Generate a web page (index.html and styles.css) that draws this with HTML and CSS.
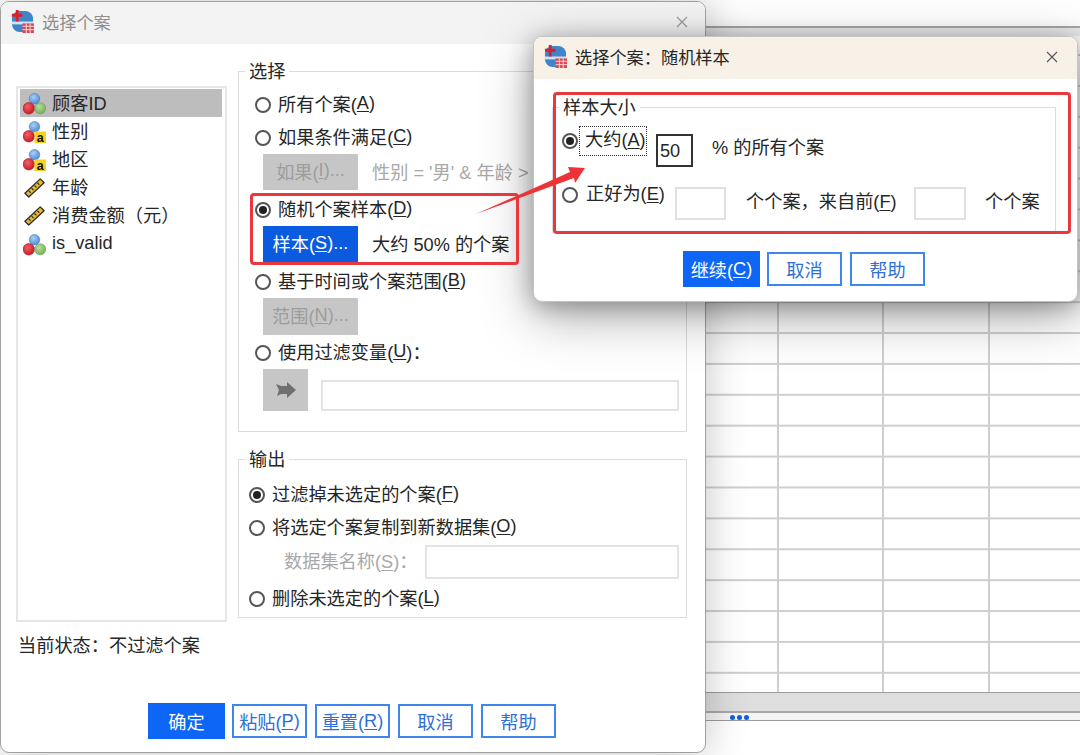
FILE: index.html
```html
<!DOCTYPE html>
<html lang="zh-CN">
<head>
<meta charset="utf-8">
<title>选择个案</title>
<link rel="stylesheet" href="styles.css">
</head>
<body>
<svg class="defs" width="0" height="0" aria-hidden="true">
  <defs>
    <radialGradient id="gb" cx="40%" cy="35%" r="70%"><stop offset="0" stop-color="#a9d0f5"/><stop offset="1" stop-color="#4a86d8"/></radialGradient>
    <radialGradient id="gr" cx="40%" cy="35%" r="70%"><stop offset="0" stop-color="#f0616a"/><stop offset="1" stop-color="#c8141e"/></radialGradient>
    <radialGradient id="gg" cx="40%" cy="35%" r="70%"><stop offset="0" stop-color="#b6dc9c"/><stop offset="1" stop-color="#72ad58"/></radialGradient>
    <symbol id="app" viewBox="0 0 24 24">
      <rect x="1" y="1" width="22" height="22" rx="8" fill="#3f86c9"/>
      <path d="M1 12h22v3H1z" fill="#cfe3f5"/>
      <path d="M5 0h3v4h4v3H8v5H5V7H1V4h4z" fill="#d8202c"/>
      <rect x="12" y="14" width="12" height="10" fill="#d94a55"/>
      <path d="M12 17h12M12 20.500h12M16 14v10M20 14v10" stroke="#f5d6d8" stroke-width="1"/>
    </symbol>
    <symbol id="nominal" viewBox="0 0 24 24">
      <circle cx="12" cy="7" r="5.500" fill="url(#gb)" stroke="#4a78b8" stroke-width=".6"/>
      <circle cx="6" cy="17" r="6" fill="url(#gr)" stroke="#a01018" stroke-width=".6"/>
      <circle cx="18" cy="17" r="5.800" fill="url(#gg)" stroke="#6c9c54" stroke-width=".6"/>
    </symbol>
    <symbol id="string" viewBox="0 0 24 24">
      <circle cx="12" cy="7" r="5.500" fill="url(#gb)" stroke="#4a78b8" stroke-width=".6"/>
      <circle cx="6" cy="17" r="6" fill="url(#gr)" stroke="#a01018" stroke-width=".6"/>
      <rect x="12" y="12" width="12" height="12" fill="#f7d21e"/>
      <text x="18" y="23" class="icon-a">a</text>
    </symbol>
    <symbol id="scale" viewBox="0 0 24 24">
      <path d="M2 18 18 3l4 4L6 22z" fill="#e8bb2c" stroke="#2c2c2c" stroke-width="1.400" stroke-linejoin="round"/>
      <path d="M6 15.500l2 2M9 12.700l2 2M12 9.900l2 2M15 7.100l2 2" stroke="#2c2c2c" stroke-width="1.200"/>
    </symbol>
    <symbol id="cross" viewBox="0 0 12 12">
      <path d="M1 1l10 10M11 1 1 11" stroke="currentColor" stroke-width="1.100" fill="none"/>
    </symbol>
  </defs>
</svg>

<div class="desktop">
  <div class="sheet">
    <div class="sheet-top"></div>
    <div class="sheet-head"></div>
    <div class="sheet-grid">
      <div class="col col-a"></div>
      <div class="col col-b"></div>
      <div class="col col-c"></div>
    </div>
    <div class="sheet-bar"></div>
    <div class="sheet-tabs"><span class="dots"><i></i><i></i><i></i></span></div>
  </div>

  <section class="window main-window">
    <header class="titlebar title-grey">
      <svg class="app-icon"><use href="#app"/></svg>
      <span class="title-text muted-title">选择个案</span>
      <svg class="close muted-close"><use href="#cross"/></svg>
    </header>
    <div class="main-body">
      <ul class="var-list">
        <li class="var selected"><svg class="var-icon"><use href="#nominal"/></svg>顾客ID</li>
        <li class="var"><svg class="var-icon"><use href="#string"/></svg>性别</li>
        <li class="var"><svg class="var-icon"><use href="#string"/></svg>地区</li>
        <li class="var"><svg class="var-icon"><use href="#scale"/></svg>年龄</li>
        <li class="var"><svg class="var-icon"><use href="#scale"/></svg>消费金额（元）</li>
        <li class="var"><svg class="var-icon"><use href="#nominal"/></svg>is_valid</li>
      </ul>
      <div class="groups">
        <fieldset class="group select-group">
          <legend>选择</legend>
          <div class="radio-row"><span class="radio"></span>所有个案(<u>A</u>)</div>
          <div class="radio-row"><span class="radio"></span>如果条件满足(<u>C</u>)</div>
          <div class="sub-row first-sub gap-b3"><span class="btn-square disabled">如果(<u>I</u>)...</span><span class="hint">性别 = '男' &amp; 年龄 &gt; 18</span></div>
          <div class="radio-row"><span class="radio on"></span>随机个案样本(<u>D</u>)</div>
          <div class="sub-row gap-b2"><span class="btn-square active">样本(<u>S</u>)...</span><span class="note">大约 50% 的个案</span></div>
          <div class="radio-row"><span class="radio"></span>基于时间或个案范围(<u>B</u>)</div>
          <div class="sub-row gap-b1"><span class="btn-square disabled">范围(<u>N</u>)...</span></div>
          <div class="radio-row"><span class="radio"></span>使用过滤变量(<u>U</u>)：</div>
          <div class="filter-row">
            <span class="arrow-btn"><svg width="22" height="18" viewBox="0 0 22 18"><path d="M1 3l5 2h6V1l9 8-9 8v-4H6l-4 2 2-6z" fill="#6f6f6f"/></svg></span>
            <span class="field filter-field"></span>
          </div>
        </fieldset>
        <fieldset class="group output-group">
          <legend>输出</legend>
          <div class="radio-row"><span class="radio on"></span>过滤掉未选定的个案(<u>F</u>)</div>
          <div class="radio-row"><span class="radio"></span>将选定个案复制到新数据集(<u>O</u>)</div>
          <div class="name-row"><span class="name-label">数据集名称(<u>S</u>)：</span><span class="field name-field"></span></div>
          <div class="radio-row"><span class="radio"></span>删除未选定的个案(<u>L</u>)</div>
        </fieldset>
      </div>
    </div>
    <p class="status">当前状态：不过滤个案</p>
    <footer class="actions main-actions">
      <span class="btn primary wide">确定</span>
      <span class="btn">粘贴(<u>P</u>)</span>
      <span class="btn">重置(<u>R</u>)</span>
      <span class="btn">取消</span>
      <span class="btn">帮助</span>
    </footer>
  </section>

  <section class="window sub-window">
    <header class="titlebar title-cream">
      <svg class="app-icon"><use href="#app"/></svg>
      <span class="title-text">选择个案：随机样本</span>
      <svg class="close sub-close"><use href="#cross"/></svg>
    </header>
    <fieldset class="group size-group">
      <legend>样本大小</legend>
      <div class="size-row">
        <span class="radio on size-radio"></span>
        <span class="focus-box">大约(<u>A</u>)</span>
        <span class="size-input dark">50</span>
        <span class="size-text pct">% 的所有个案</span>
      </div>
      <div class="size-row second">
        <span class="radio size-radio"></span>
        <span class="exact-label">正好为(<u>E</u>)</span>
        <span class="size-input light first-input"></span>
        <span class="size-text cases">个个案，来自前(<u>F</u>)</span>
        <span class="size-input light second-input"></span>
        <span class="size-text total">个个案</span>
      </div>
    </fieldset>
    <footer class="actions sub-actions">
      <span class="btn primary wide">继续(<u>C</u>)</span>
      <span class="btn">取消</span>
      <span class="btn">帮助</span>
    </footer>
  </section>

  <div class="mark mark-left"></div>
  <div class="mark mark-right"></div>
  <svg class="arrow" width="1080" height="755" viewBox="0 0 1080 755"><polygon points="476,214 570,172 568,167 585,168 575,183 574,178" fill="#ee3338"/></svg>
</div>
</body>
</html>
```
FILE: styles.css
```css
* { box-sizing: border-box; }
html, body { margin: 0; padding: 0; background: #fff; }
body { font-family: "Liberation Sans", "Noto Sans CJK SC", sans-serif; font-size: 18.2px; color: #262626; }
.defs { position: absolute; }
.icon-a { font: bold 13px "Liberation Sans", sans-serif; text-anchor: middle; fill: #111; }

.desktop { position: relative; width: 1080px; height: 755px; overflow: hidden; background: #fff; }

/* background data sheet */
.sheet { display: flex; flex-direction: column; height: 755px; padding-left: 706px; }
.sheet-top { height: 26px; flex: none; }
.sheet-head { height: 10px; flex: none; border-top: 2px solid #a8a8a8; background: #ececec; }
.sheet-grid {
  height: 656px; flex: none; display: flex;
  background-image: linear-gradient(to top, #cfcfcf 2px, transparent 2px);
  background-size: 100% 30.9px;
  background-position: 0 -10.9px;
}
.col { height: 100%; border-right: 2px solid #cfcfcf; flex: none; }
.col-a { width: 73px; }
.col-b { width: 105px; }
.col-c { width: 106px; }
.sheet-bar { height: 21px; flex: none; background: #dedede; border-top: 1px solid #9c9c9c; border-bottom: 2px solid #a8a8a8; }
.sheet-tabs { height: 8px; flex: none; background: #f4f4f4; border-bottom: 1px solid #9c9c9c; }
.dots { display: flex; gap: 2px; padding: 2px 0 0 24px; }
.dots i { width: 5px; height: 5px; border-radius: 50%; background: #0f5fe0; }

/* windows */
.window { position: absolute; background: #fff; }
.main-window {
  left: 0; top: 1px; width: 706px; height: 752px;
  display: flex; flex-direction: column;
  border: 1px solid #a0a0a0; border-radius: 9px;
  box-shadow: 0 0 42px rgba(0, 0, 0, .24);
}
.sub-window {
  left: 533px; top: 36px; width: 545px; height: 266px;
  border: 1px solid #c4c4c4; border-radius: 9px;
  box-shadow: 0 4px 22px rgba(0, 0, 0, .28), 0 14px 52px rgba(0, 0, 0, .34);
}
.titlebar { display: flex; align-items: center; height: 42px; flex: none; padding: 0 0 3px 10px; border-radius: 8px 8px 0 0; }
.title-grey { background: #f3f3f3; }
.title-cream { background: #f8f1e7; }
.app-icon { width: 23px; height: 23px; flex: none; margin-right: 8px; }
.title-text { font-size: 17.2px; flex: 1; }
.muted-title { color: #8e8e8e; }
.close { width: 12px; height: 12px; flex: none; margin-right: 17px; color: #555; }
.muted-close { color: #999; }
.sub-close { margin-right: 19px; }

/* main dialog */
.main-body { display: flex; height: 577px; flex: none; padding-left: 15px; }
.var-list {
  list-style: none; margin: 42px 0 0; padding: 1px 2px;
  width: 211px; height: 536px; flex: none;
  border: 2px solid #e6e6e6;
}
.var { display: flex; align-items: center; height: 28px; padding: 0 0 2px 3px; white-space: nowrap; }
.var:last-child { padding-bottom: 0; }
.var.selected { background: #bdbdbd; margin-right: 1px; }
.var-icon { width: 23px; height: 23px; flex: none; margin: 2px 6px 0 0; }
.groups { margin-left: 11px; width: 449px; flex: none; padding-top: 14px; }
.group { margin: 0; border: 1px solid #dcdcdc; min-width: 0; padding: 0; }
.group legend { padding: 2px 4px 0; line-height: 24px; }
.select-group { height: 374px; padding: 4px 0 0 16px; }
.select-group legend { margin-left: -10px; }
.output-group { height: 172px; margin-top: 14px; padding: 6px 0 0 10px; }
.output-group legend { margin-left: -4px; }
.radio-row { display: flex; align-items: center; height: 33px; padding-bottom: 3px; white-space: nowrap; }
u { text-underline-offset: 2px; }
.radio { position: relative; display: inline-block; width: 16px; height: 16px; flex: none; border: 2px solid #555; border-radius: 50%; margin: 3px 7px 0 0; background: #fff; }
.radio.on::after { content: ""; position: absolute; left: 2px; top: 2px; width: 8px; height: 8px; border-radius: 50%; background: #222; }
.sub-row { display: flex; align-items: center; height: 37px; margin-left: 8px; white-space: nowrap; }
.sub-row.first-sub { height: 36px; }
.first-sub .btn-square { height: 36px; }
.gap-b3 { margin-bottom: 3px; }
.gap-b2 { margin-bottom: 2px; }
.gap-b1 { margin-bottom: 1px; }
.btn-square { display: flex; align-items: center; justify-content: center; width: 95px; height: 37px; padding-bottom: 3px; flex: none; }
.btn-square.disabled { background: #c6c6c6; color: #9d9d9d; }
.btn-square.active { background: #0b5be0; color: #fff; }
.hint { margin: 0 0 3px 14px; color: #a8a8a8; }
.note { margin: 0 0 3px 14px; }
.filter-row { display: flex; align-items: flex-end; height: 42px; margin-left: 8px; }
.arrow-btn { display: flex; align-items: center; justify-content: center; width: 45px; height: 42px; background: #c6c6c6; }
.field { display: block; border: 2px solid #e4e4e4; background: #fff; }
.filter-field { width: 358px; height: 31px; margin-left: 13px; }
.name-row { display: flex; align-items: center; height: 34px; margin: 1px 0 3px; }
.name-label { width: 176px; flex: none; padding: 0 0 4px 35px; color: #a8a8a8; white-space: nowrap; }
.name-field { width: 254px; height: 34px; }
.status { margin: 13px 0 0 17px; line-height: 24px; }
.actions { display: flex; align-items: center; gap: 8px; }
.main-actions { margin-top: 45px; padding-left: 147px; }
.btn { display: flex; align-items: center; justify-content: center; width: 75px; height: 34px; border: 2px solid #3f86ee; color: #2f6fd8; white-space: nowrap; }
.btn.primary { background: #0d66f5; border-color: #0d66f5; color: #fff; }
.btn.wide { width: 77px; height: 36px; margin-right: -1px; }

/* sub dialog */
.size-group { width: 504px; height: 139px; margin: 15px 0 0 18px; padding: 6px 0 0 9px; }
.size-group legend { margin-left: -3px; }
.size-row { display: flex; align-items: flex-start; height: 41px; white-space: nowrap; }
.size-row.second { margin-top: 13px; }
.radio.size-radio { margin: 7px 1px 0 0; }
.focus-box { display: block; height: 30px; width: 68px; line-height: 26px; padding-left: 5px; border: 1px dotted #333; }
.size-input { display: block; flex: none; background: #fff; }
.size-input.dark { width: 37px; height: 33px; margin: 8px 0 0 9px; border: 2px solid #333; padding-left: 2px; line-height: 30px; }
.size-input.light { height: 33px; margin-top: 7px; border: 2px solid #e0e0e0; }
.size-text { margin-top: 10px; line-height: 24px; }
.pct { margin-left: 19px; }
.exact-label { margin-left: 7px; line-height: 28px; width: 77px; }
.first-input { width: 51px; margin-left: 12px; }
.cases { margin-left: 20px; width: 150px; }
.second-input { width: 52px; margin-left: 18px; }
.total { margin-left: 19px; }
.sub-actions { margin-top: 18px; padding-left: 149px; }

/* annotations */
.mark { position: absolute; border: 3px solid #e8383d; border-radius: 4px; }
.mark-left { left: 250px; top: 193px; width: 269px; height: 72px; }
.mark-right { left: 553px; top: 92px; width: 518px; height: 142px; }
.arrow { position: absolute; left: 0; top: 0; pointer-events: none; }
```
